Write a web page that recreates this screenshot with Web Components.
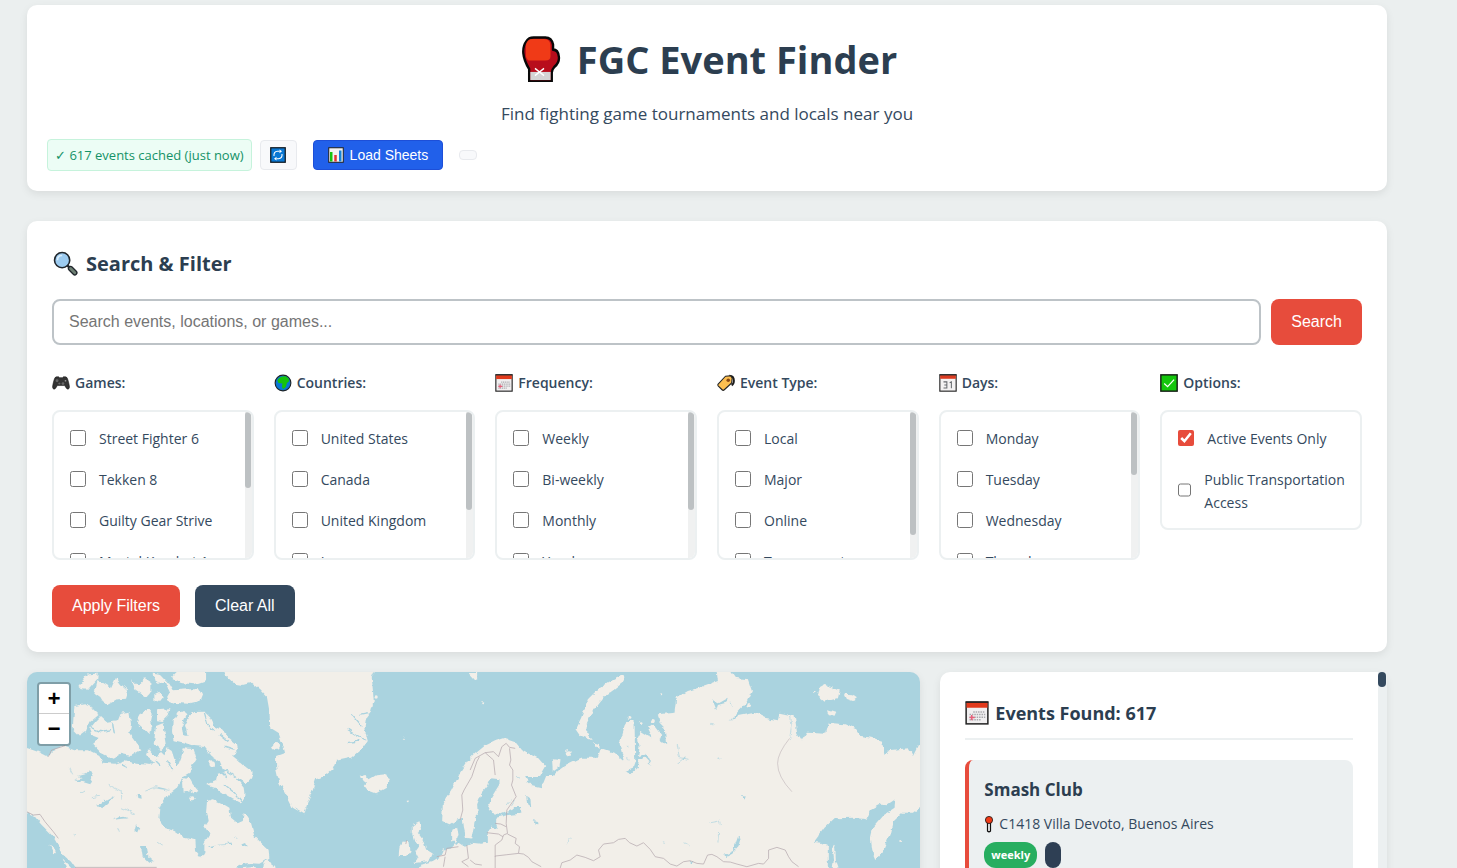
<!DOCTYPE html>
<html lang="en">
<head>
<meta charset="utf-8">
<meta name="viewport" content="width=device-width, initial-scale=1">
<title>FGC Event Finder</title>
<style>
  html { scrollbar-width: none; }
  body {
    margin: 0;
    background: #ebefef;
    color: #2c3e50;
    font-family: "Open Sans", "Noto Sans", sans-serif;
    font-size: 14px;
    line-height: 23px;
  }
</style>
</head>
<body>
<fgc-app></fgc-app>

<script>
const define = (name, html, setup) => {
  const template = document.createElement('template');
  template.innerHTML = `<style>*{box-sizing:border-box}:host([hidden]){display:none}</style>${html}`;
  customElements.define(name, class extends HTMLElement {
    constructor() {
      super();
      this.attachShadow({ mode: 'open' }).append(template.content.cloneNode(true));
    }
    connectedCallback() { if (setup) setup(this, this.shadowRoot); }
  });
};

const icons = {
  glove: `<g transform="translate(2.600 0) scale(.9 1)"><path d="M4.500 3.500Q6 1 10 1h9q5 0 6 5v3.500q4 0 4.500 5 .5 4-3.500 7-2 2-2 4v6.200H6.500V23Q2.500 17 2 12q-.5-5 2.500-8.500z" fill="#b80d1c" stroke="#080808" stroke-width="1.800" stroke-linejoin="round"/>
    <path d="M7.400 25h15.700v5.600H7.400z" fill="#d4d4d4"/>
    <path d="M4 6q1-4 5-4h9q5 0 5 5v7q0 3-4 3H6q-2-1-2-4z" fill="#f03a17"/>
    <path d="M11 22.500l7 5M18 22.500l-7 5" stroke="#fff" stroke-width="1.100"/></g>`,
  search: `<circle cx="12" cy="12" r="9" fill="#9ccbf0" stroke="#20262c" stroke-width="1.900"/>
    <path d="M6.500 12q0-5.500 5.500-5.500" stroke="#d8edfc" stroke-width="2" fill="none"/>
    <path d="M18.500 18.500l3 3" stroke="#20262c" stroke-width="3"/>
    <path d="M22 22l5 5" stroke="#20262c" stroke-width="6.500" stroke-linecap="round"/>
    <path d="M22 22l5 5" stroke="#6d7f73" stroke-width="3.400" stroke-linecap="round"/>`,
  refresh: `<rect x="1.500" y="1.500" width="29" height="29" fill="#0a78d4" stroke="#101820" stroke-width="2.500"/>
    <g fill="none" stroke="#fff" stroke-width="2.200"><path d="M8 18q-1-9 7-9.500h4M24 14q1 9-7 9.500h-4"/></g>
    <path d="M19 4.800l5 3.800-5 3.800zM13 19.600l-5 3.800 5 3.800z" fill="#fff"/>`,
  chart: `<rect x="1.500" y="1.500" width="29" height="29" fill="#f3f3f3" stroke="#1b1b1b" stroke-width="2"/>
    <path d="M4 10h5v19H4z" fill="#17c40f"/><path d="M12.500 16h5v13h-5z" fill="#e23535"/><path d="M22 7h5v22h-5z" fill="#1583d8"/>`,
  gamepad: `<path d="M8 5h4l1 1.500h6L20 5h4q3 0 4.500 6Q31 20 31 23t-2.500 4Q26 27.500 22.500 20.500h-13Q6 27.500 3.500 27 1 26 1 23T3.500 11Q5 5 8 5z" fill="#333" stroke="#1b1b1b" stroke-width="1"/>
    <circle cx="9" cy="12" r="2.600" fill="#666"/><circle cx="19.500" cy="17" r="2.400" fill="#666"/><circle cx="24" cy="12" r="1.500" fill="#999"/><path d="M11 17h4M13 15v4" stroke="#777"/>`,
  globe: `<circle cx="16" cy="16" r="14" fill="#0a78d4" stroke="#1c2226" stroke-width="2"/>
    <path d="M9 7q5-4 12-3l5 4 1 5-4 3-2 7-5 4-2-5 1-5-7-1-2-5z" fill="#16c40c"/>`,
  calendar: `<rect x="1.500" y="1.500" width="29" height="29" fill="#f1eff0" stroke="#222" stroke-width="2"/>
    <path d="M2 2h28v7H2z" fill="#e23a1c"/><path d="M1 1.500h30" stroke="#222" stroke-width="2"/>
    <path d="M11 14.500h16M6 18h21M6 21.500h21M6 25h15" stroke="#a9a9ad" stroke-width="2" stroke-dasharray="2 1.200"/>
    <path d="M6 22h7M9 18.500v7" stroke="#e8607a" stroke-width="2"/>`,
  tag: `<path d="M22 3q8 0 8 9 0 6-4 8" fill="none" stroke="#1b1b1b" stroke-width="3.500"/>
    <path d="M2 18L15 4l9-1 3 4-1 9-13 12q-2 2-4 0l-7-7q-1-1.500 0-3z" fill="#fdbf50" stroke="#222" stroke-width="1.900" stroke-linejoin="round"/>
    <circle cx="20" cy="11" r="3.200" fill="#8c4a12"/>`,
  day: `<rect x="1.500" y="1.500" width="29" height="29" fill="#f4f2f2" stroke="#222" stroke-width="2"/>
    <path d="M2 2h28v6.500H2z" fill="#dc3c22"/><path d="M1 1.500h30" stroke="#222" stroke-width="2"/>
    <path d="M8 14h6v11H8M9.500 19.500H14M19 15.500l3-1.500v11.500" fill="none" stroke="#66696d" stroke-width="1.800"/>`,
  check: `<rect x="1.500" y="1.500" width="29" height="29" fill="#14c60c" stroke="#141c14" stroke-width="2.500"/>
    <path d="M7.500 17l6 5.500L25 10" fill="none" stroke="#fff" stroke-width="2.200"/>`,
  pin: `<path d="M13 12h6v18q-3 3-6 0z" fill="#ececec" stroke="#111" stroke-width="2.400"/>
    <circle cx="16" cy="8" r="7.200" fill="#f03a17" stroke="#111" stroke-width="1.600"/>`
};

define('fgc-icon', `
  <style>
    :host { display: inline-block; flex: none; width: 18px; height: 18px; }
    svg { display: block; width: 100%; height: 100%; }
  </style>
  <svg viewBox="0 0 32 32" aria-hidden="true"></svg>`,
  (host, root) => { root.querySelector('svg').innerHTML = icons[host.getAttribute('name')] || ''; });

define('fgc-header', `
  <style>
    :host { display: block; padding: 20px; border-radius: 10px; background: #fff; box-shadow: 0 3px 8px rgba(0,0,0,.08); }
    h1 { display: flex; align-items: center; justify-content: center; gap: 14px; margin: 0 0 7px; font-size: 38px; line-height: 68px; font-weight: 700; }
    h1 fgc-icon { width: 46px; height: 46px; }
    p { margin: 0 0 11px; text-align: center; font-size: 17px; line-height: 28px; color: #34495e; }
    .row { display: flex; align-items: center; gap: 16px; height: 32px; }
    .cache { display: flex; align-items: center; gap: 8px; }
    .status { height: 32px; padding: 0 7px; border: 1px solid #c6f3dc; border-radius: 4px; background: #ecfdf5; color: #149267; font-size: 13px; line-height: 30px; white-space: nowrap; }
    button { display: flex; align-items: center; justify-content: center; height: 30px; border-radius: 4px; cursor: pointer; }
    .refresh { width: 37px; padding: 0; border: 1px solid #e8eaee; background: #f8f9fb; }
    .refresh fgc-icon, .load fgc-icon { width: 16px; height: 16px; }
    .load { gap: 6px; padding: 0 14px; border: 1px solid #1d4fd8; background: #2160ea; color: #fff; font: 14px "Liberation Sans", Arial, sans-serif; }
    .blank { width: 18px; height: 10px; border: 1px solid #e8eaee; border-radius: 4px; background: #f8f9fb; }
  </style>
  <h1><fgc-icon name="glove"></fgc-icon>FGC Event Finder</h1>
  <p>Find fighting game tournaments and locals near you</p>
  <div class="row">
    <div class="cache">
      <span class="status">✓ 617 events cached (just now)</span>
      <button class="refresh" type="button" aria-label="Refresh events"><fgc-icon name="refresh"></fgc-icon></button>
    </div>
    <button class="load" type="button"><fgc-icon name="chart"></fgc-icon>Load Sheets</button>
    <span class="blank"></span>
  </div>`);

define('fgc-filter', `
  <style>
    :host { display: block; min-width: 0; }
    fieldset { min-width: 0; margin: 0; padding: 0; border: 0; }
    legend { display: flex; align-items: center; gap: 5px; margin: 0 0 15px; padding: 0; font-size: 14px; line-height: 24px; font-weight: 600; color: #34495e; }
    .box { display: flex; max-height: 150px; border: 2px solid #ecf0f1; border-radius: 8px; overflow: hidden; }
    .list { flex: 1; min-width: 0; padding: 5px 8px 6px 16px; overflow-y: auto; scrollbar-width: none; }
    label { display: flex; align-items: center; gap: 13px; padding: 8px 0; color: #34495e; }
    label span { padding-top: 2px; }
    input { width: 16px; height: 16px; margin: 0; accent-color: #e74c3c; }
    .track { width: 7px; background: #f0f1f1; }
    .thumb { width: 6px; border-radius: 3px; background: #bdc1c3; }
  </style>
  <fieldset>
    <legend><slot></slot></legend>
    <div class="box"><div class="list"></div></div>
  </fieldset>`,
  (host, root) => {
    const icon = document.createElement('fgc-icon');
    icon.setAttribute('name', host.getAttribute('icon'));
    root.querySelector('legend').prepend(icon);
    const list = root.querySelector('.list');
    for (const text of host.getAttribute('items').split('|')) {
      const label = document.createElement('label');
      const input = document.createElement('input');
      input.type = 'checkbox';
      input.checked = text === host.getAttribute('checked');
      const span = document.createElement('span');
      span.textContent = text;
      label.append(input, span);
      list.append(label);
    }
    if (host.hasAttribute('visible')) {
      const track = document.createElement('div');
      track.className = 'track';
      track.innerHTML = `<div class="thumb" style="height:${host.getAttribute('visible')}"></div>`;
      list.after(track);
    }
  });

define('fgc-search', `
  <style>
    :host { display: block; padding: 25px; border-radius: 10px; background: #fff; box-shadow: 0 3px 8px rgba(0,0,0,.08); }
    h2 { display: flex; align-items: center; gap: 7px; margin: 0 0 18px; font-size: 20px; line-height: 35px; font-weight: 700; }
    h2 fgc-icon { width: 27px; height: 27px; }
    .bar { display: flex; gap: 10px; margin-bottom: 26px; }
    input { flex: 1; min-width: 0; height: 46px; padding: 0 15px; border: 2px solid #bdc3c7; border-radius: 8px; outline: 0; color: #2c3e50; font: 16px "Liberation Sans", Arial, sans-serif; }
    input::placeholder { color: #757575; }
    button { height: 42px; padding: 0 20px; border: 0; border-radius: 8px; background: #e74c3c; color: #fff; font: 16px "Liberation Sans", Arial, sans-serif; white-space: nowrap; cursor: pointer; }
    .bar button { height: 46px; }
    .filters { display: grid; grid-template-columns: repeat(6, minmax(0, 1fr)); align-items: start; gap: 20px; margin-bottom: 25px; }
    .actions { display: flex; gap: 15px; }
    .clear { background: #34495e; }
  </style>
  <h2><fgc-icon name="search"></fgc-icon>Search &amp; Filter</h2>
  <div class="bar">
    <input type="text" aria-label="Search events" placeholder="Search events, locations, or games...">
    <button type="button">Search</button>
  </div>
  <div class="filters">
    <fgc-filter icon="gamepad" visible="52%" items="Street Fighter 6|Tekken 8|Guilty Gear Strive|Mortal Kombat 1">Games:</fgc-filter>
    <fgc-filter icon="globe" visible="67%" items="United States|Canada|United Kingdom|Japan">Countries:</fgc-filter>
    <fgc-filter icon="calendar" visible="67%" items="Weekly|Bi-weekly|Monthly|Yearly">Frequency:</fgc-filter>
    <fgc-filter icon="tag" visible="84%" items="Local|Major|Online|Tournament">Event Type:</fgc-filter>
    <fgc-filter icon="day" visible="43%" items="Monday|Tuesday|Wednesday|Thursday">Days:</fgc-filter>
    <fgc-filter icon="check" checked="Active Events Only" items="Active Events Only|Public Transportation Access">Options:</fgc-filter>
  </div>
  <div class="actions">
    <button type="button">Apply Filters</button>
    <button type="button" class="clear">Clear All</button>
  </div>`);

define('fgc-map', `
  <style>
    :host { display: block; position: relative; height: 500px; border-radius: 10px; overflow: hidden; background: #aad3df; box-shadow: 0 3px 8px rgba(0,0,0,.08); }
    svg { display: block; width: 100%; height: 100%; }
    .land { fill: #f2efe9; }
    .water { fill: #aad3df; }
    .inlet { fill: none; stroke: #aad3df; stroke-width: 4; }
    .border { fill: none; stroke: #b5a9ae; stroke-width: 2.200; }
    .zoom { position: absolute; top: 10px; left: 10px; width: 34px; border: 2px solid rgba(0,0,0,.25); border-radius: 4px; background-clip: padding-box; overflow: hidden; }
    button { display: block; width: 30px; height: 30px; padding: 3px 0 0; border: 0; background: #fff; color: #000; font: bold 22px/28px "Liberation Mono", monospace; cursor: pointer; }
    button:first-child { border-bottom: 1px solid #ccc; }
  </style>
  <svg viewBox="27 672 893 500" preserveAspectRatio="xMidYMin slice" role="img" aria-label="World map of events">
    <filter id="coast" x="-5%" y="-5%" width="110%" height="110%">
      <feTurbulence type="fractalNoise" baseFrequency=".16" numOctaves="2" seed="4"/>
      <feDisplacementMap in="SourceGraphic" scale="5" xChannelSelector="R" yChannelSelector="G"/>
    </filter>
    <g filter="url(#coast)">
    <g transform="translate(21 661) scale(.3333)">
      <g class="land">
        <path d="M0 258L20 262 50 272 80 287 95 268 125 255 160 268 200 268 235 285 245 305 280 308 310 298 345 308 390 312 400 302 378 285 385 265 400 285 412 290 420 270 430 280 440 262 452 270 462 300 470 315 480 290 488 262 520 265 528 290 515 312 505 335 488 345 465 385 445 400 430 420 415 440 412 475 430 500 460 510 490 530 520 537 522 570 540 592 550 575 550 545 565 520 550 495 560 480 555 455 558 420 575 415 600 425 625 440 630 470 650 487 665 480 668 455 690 490 700 525 720 545 742 565 745 590 715 608 680 606 650 612 640 624 700 618 715 622 690 700 660 1400 200 1400 165 624 150 602 125 580 110 550 95 525 60 490 40 465 20 455 0 450z"/>
        <path d="M725 640L728 610 740 592 748 605 762 615 768 640z"/>
        <path d="M485 395L483 365 490 348 505 352 515 370 532 390 520 398 505 388z"/>
        <path d="M453 212L455 180 470 155 490 150 497 160 482 195 486 222 500 225 492 190 505 165 520 153 550 152 568 170 580 195 600 205 622 232 645 250 650 275 635 285 660 305 695 335 690 352 675 367 640 345 620 330 605 325 595 300 572 285 550 258 520 255 490 245 458 238z"/>
        <path d="M555 372L585 360 590 338 615 332 645 352 668 380 670 400 665 430 635 415 610 400 585 382z"/>
        <path d="M205 205L225 180 240 165 262 185 290 180 300 155 325 152 330 190 325 215 350 250 358 268 330 285 300 278 275 293 240 275 215 250 235 232 210 222z"/>
        <path d="M160 135L190 130 215 140 235 160 205 185 195 210 175 225 155 205z"/>
        <path d="M345 182L358 158 385 143 395 155 390 180 395 205 380 217 365 200z"/>
        <path d="M408 145L445 142 440 165 425 180 408 178zM405 195L425 187 433 225 438 255 420 268 398 250z"/>
        <path d="M172 75L200 40 230 38 228 58 205 83 180 82zM220 95L230 58 250 70 270 82 285 50 300 70 322 90 315 113 290 115 260 131 245 120 238 108zM330 55L350 75 372 52 388 62 388 95 375 110 345 90zM395 38L420 42 437 60 415 67 398 55zM400 100L415 92 425 110 415 123 400 118z"/>
        <path d="M430 58L445 65 458 88 500 85 535 85 543 100 535 120 500 128 460 125 435 117 447 95zM450 50L470 30 555 30 555 58 520 70 480 66z"/>
        <path d="M600 20L612 42 640 68 665 72 690 65 715 85 738 110 745 150 748 200 772 215 785 250 792 275 765 285 765 320 775 365 795 400 815 440 850 460 858 430 875 385 885 355 910 345 935 325 945 300 990 290 1030 255 1040 240 1030 200 1035 170 1050 150 1058 120 1055 80 1052 50 1065 20z"/>
        <path d="M1015 348L1035 342 1045 355 1065 343 1095 340 1105 360 1095 380 1065 397 1040 388 1028 372 1035 362z"/>
        <path d="M1172 495L1195 484 1200 505 1190 515 1205 535 1215 565 1235 577 1225 600 1180 606 1192 590 1183 572 1195 555 1180 540 1172 515zM1135 557L1145 538 1165 540 1168 570 1155 585 1133 585z"/>
        <circle cx="572" cy="308" r="10"/><circle cx="765" cy="255" r="12"/><circle cx="514" cy="412" r="6"/><circle cx="1065" cy="108" r="5"/><circle cx="1148" cy="233" r="3"/><circle cx="1160" cy="424" r="3"/>
        <path d="M85 553L105 570 98 582zM125 595L165 635 135 622zM1345 36L1365 36 1365 58z"/>
      </g>
      <path class="inlet" d="M980 205L1010 225 1035 240M990 160L1020 195M975 245L1015 240M1015 160L1040 155M210 200L240 212 270 205M275 188L280 220M550 155L560 190 580 210M595 220L620 240M610 255L640 265M545 275L570 290M600 330L620 350M610 370L640 395 665 425M440 300L455 330M405 300L420 315M300 310L320 320M480 255L470 290"/>
      <path class="water" d="M170 345L190 340 205 325 215 345 205 370 180 362 160 358 185 352zM228 432L250 420 278 405 262 425 240 445zM275 478L300 465 320 472 290 475zM360 555L375 555 378 580 400 600 385 605 365 585zM345 490L355 500 348 515 340 508zM400 375L440 385 415 383zM618 545l15 0-4 10zM660 550l12-4 5 10zM560 556l20-4-4 8zM350 402l10 0 2 14-10-2z"/>
      <path class="inlet" style="stroke-width:2" d="M260 370L300 390 303 415M210 410L240 405M300 440L345 460M145 320L155 340M370 390L400 380 445 388M290 498L295 512M405 540L425 555M590 552L620 550M640 525L650 535M180 395L190 390M155 520L162 525"/>
    </g>
    <g transform="translate(471 661) scale(.3333)">
      <path class="land" d="M-85 430L-87 480 -65 490 -40 475 -25 470 -22 500 -15 530 0 532 8 500 10 480 20 465 18 430 30 400 50 375 60 352 85 355 85 370 60 410 50 440 60 455 90 460 120 448 148 435 150 452 135 460 110 462 75 470 75 485 80 500 60 497 50 515 50 545 30 548 0 545 -20 555 -35 545 -45 555 -50 535 -60 538 -60 510 -42 500 -38 520 -45 545 -60 562 -85 565 -95 588 -115 600 -150 610 -165 640 -165 1400 1068 1400 1070 555 1050 545 1028 543 1060 500 1090 472 1150 470 1185 475 1200 445 1230 428 1250 430 1272 415 1270 440 1240 460 1205 500 1198 530 1205 580 1212 597 1235 570 1255 520 1265 480 1290 455 1325 455 1350 435 1400 430 1400 262 1340 255 1325 285 1312 262 1250 268 1240 285 1232 240 1200 230 1170 225 1155 205 1120 190 1070 185 1062 215 1010 212 992 238 978 215 970 165 925 155 920 178 880 170 850 155 800 165 775 180 800 152 825 125 842 90 830 55 790 50 770 20 735 20 740 60 700 75 650 90 615 110 610 155 560 160 565 185 580 200 585 250 565 235 570 222 545 190 530 200 545 232 510 210 500 230 505 260 500 285 525 278 540 312 520 290 503 295 500 320 480 340 460 330 485 320 492 300 490 180 465 180 450 230 445 250 458 298 430 275 390 262 380 290 330 290 280 315 260 330 245 345 225 345 210 382 180 375 165 345 205 345 222 315 200 290 150 265 130 240 100 230 70 240 40 255 10 280 -10 300 -35 340 -60 390z"/>
      <g class="land">
        <path d="M455 42L458 62 430 85 395 110 365 150 347 190 345 215 362 238 325 222 313 205 330 170 350 115 380 85 420 60z"/>
        <path d="M1045 80L1060 72 1080 78 1105 90 1100 112 1060 122 1040 105zM1118 98L1140 100 1157 112 1145 120 1125 113zM1070 148L1095 155 1090 167 1075 162zM365 243L385 250 385 264zM245 292L268 295 265 318 248 330z"/>
        <path d="M1083 548L1092 560 1094 600 1102 622 1084 624 1088 590z"/>
        <circle cx="290" cy="277" r="9"/><circle cx="475" cy="168" r="6"/><circle cx="832" cy="133" r="7"/><circle cx="545" cy="180" r="6"/><circle cx="510" cy="185" r="4"/><circle cx="1030" cy="92" r="3"/><circle cx="33" cy="127" r="3"/><circle cx="570" cy="100" r="3"/><circle cx="1290" cy="540" r="3"/>
      </g>
      <path class="water" d="M800 528L808 530 802 555 780 578 762 588 760 582 785 570zM165 405L178 415 180 440 168 430zM188 478L200 480 202 490 190 488zM130 435L150 435 150 452 135 458zM722 115L740 128 772 110 770 124 740 132 735 148zM812 402l14 2-4 12zM165 360l30-5 15 12-10 8-20-2zM1070 560h8v70h-8zM655 600l12 0-6 8z"/>
      <path class="inlet" style="stroke-width:2" d="M618 250L625 290 655 295M615 310L640 290M718 485L745 480 748 492M742 515L740 545M285 550L298 530M120 415L105 435M130 420L118 440M740 290l8 4M720 190l8 2M780 125l5 15M955 165L960 200 955 235M465 290l10 4M135 345l10 12M470 255l5 3M640 545l12 6M575 545l6 2"/>
    </g>
    </g>
    <g class="border" transform="translate(20 660) scale(.3333)">
      <path d="M20 455L40 465 60 463 75 485 100 515 115 535M165 622L410 622M85 290L95 270 135 257M1378 290L1370 305 1355 350 1332 390 1325 405 1328 450 1320 480M1160 540L1157 552M1250 590L1275 585 1280 565 1315 560M1275 590L1270 620M1340 555L1345 595 1325 605 1345 620"/>
    </g>
    <g class="border" transform="translate(470 660) scale(.3333)">
      <path d="M0 330L15 295 45 278 70 300 75 345M45 278L70 275 85 290 95 260 108 250 118 262 135 265M118 265L122 300 118 315 128 330 128 360 124 375 138 410 110 450 108 490 112 520 100 525 95 540 75 555 75 590M75 490L92 492 108 500M50 518L85 522 98 530M112 522L138 535 135 550 148 560 145 580 110 584 75 588 75 624M145 580L160 582 175 592 185 605 213 620M0 600L15 612 35 615M270 624L275 608 300 600 320 585 345 592 370 602 390 590 385 570 400 552 430 548 445 538 465 535 478 548 500 558 520 548 540 568 555 590 580 595 600 612 620 618 640 605 660 602 680 610 700 612 712 585 725 583 740 590 760 605 780 606 800 612 830 620 865 610 880 612 895 595 895 570 920 562 945 570 955 590 965 605 985 620"/>
      <path style="stroke-width:1.500" d="M958 235Q922 280 922 310 922 350 965 395"/>
    </g>
  </svg>
  <div class="zoom">
    <button type="button" aria-label="Zoom in">+</button>
    <button type="button" aria-label="Zoom out">−</button>
  </div>`);

define('fgc-event', `
  <style>
    :host { display: block; padding: 16px 15px; border-left: 4px solid #e74c3c; border-radius: 8px; background: #ecf0f1; }
    h3 { margin: 0 0 9px; font-size: 17px; line-height: 27px; font-weight: 700; }
    p { display: flex; align-items: center; gap: 5px; margin: 0 0 7px; color: #34495e; }
    p fgc-icon { width: 10px; }
    .tags { display: flex; gap: 8px; }
    .tags span { height: 26px; padding: 0 7px; border-radius: 12px; background: #27ae60; color: #fff; font-size: 11px; line-height: 26px; font-weight: 700; }
    .tags .empty { width: 16px; background: #2e3f54; }
  </style>
  <h3><slot name="title"></slot></h3>
  <p><fgc-icon name="pin"></fgc-icon><slot name="place"></slot></p>
  <div class="tags"><span><slot name="frequency"></slot></span><span class="empty"></span></div>`,
  (host, root) => {
    root.querySelector('fgc-icon').shadowRoot.querySelector('svg').setAttribute('viewBox', '6 0 20 32');
  });

define('fgc-events', `
  <style>
    :host { display: flex; height: 500px; border-radius: 10px; background: #fff; box-shadow: 0 3px 8px rgba(0,0,0,.08); }
    section { flex: 1; min-width: 0; padding: 25px; }
    h2 { display: flex; align-items: center; gap: 6px; margin: 0 0 20px; padding-bottom: 9px; border-bottom: 2px solid #ecf0f1; font-size: 18px; line-height: 32px; font-weight: 700; }
    h2 fgc-icon { width: 24px; height: 24px; }
    .track { width: 9px; background: #ecf0f1; }
    .thumb { width: 8px; height: 15px; border-radius: 4px; background: #34495e; }
  </style>
  <section>
    <h2><fgc-icon name="calendar"></fgc-icon>Events Found: 617</h2>
    <slot></slot>
  </section>
  <div class="track"><div class="thumb"></div></div>`);

define('fgc-app', `
  <style>
    :host { display: block; padding: 5px 70px 20px 27px; }
    fgc-header { margin-bottom: 30px; }
    fgc-search { margin-bottom: 20px; }
    main { display: grid; grid-template-columns: 2fr 1fr; gap: 20px; }
  </style>
  <fgc-header></fgc-header>
  <fgc-search></fgc-search>
  <main>
    <fgc-map></fgc-map>
    <fgc-events>
      <fgc-event>
        <span slot="title">Smash Club</span>
        <span slot="place">C1418 Villa Devoto, Buenos Aires</span>
        <span slot="frequency">weekly</span>
      </fgc-event>
    </fgc-events>
  </main>`);
</script>
</body>
</html>
